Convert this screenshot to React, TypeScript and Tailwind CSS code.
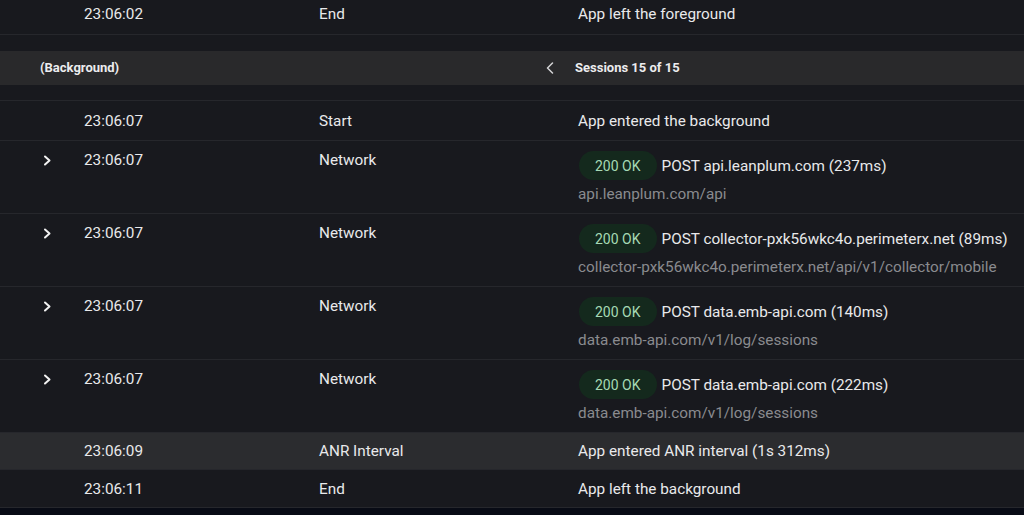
import React from "react";

type Row =
  | { kind: "simple"; time: string; type: string; text: string; highlight?: boolean }
  | { kind: "network"; time: string; host: string; ms: number; url: string };

const rows: Row[] = [
  { kind: "simple", time: "23:06:07", type: "Start", text: "App entered the background" },
  { kind: "network", time: "23:06:07", host: "api.leanplum.com", ms: 237, url: "api.leanplum.com/api" },
  {
    kind: "network",
    time: "23:06:07",
    host: "collector-pxk56wkc4o.perimeterx.net",
    ms: 89,
    url: "collector-pxk56wkc4o.perimeterx.net/api/v1/collector/mobile",
  },
  { kind: "network", time: "23:06:07", host: "data.emb-api.com", ms: 140, url: "data.emb-api.com/v1/log/sessions" },
  { kind: "network", time: "23:06:07", host: "data.emb-api.com", ms: 222, url: "data.emb-api.com/v1/log/sessions" },
  { kind: "simple", time: "23:06:09", type: "ANR Interval", text: "App entered ANR interval (1s 312ms)", highlight: true },
  { kind: "simple", time: "23:06:11", type: "End", text: "App left the background" },
];

function ChevronRight() {
  return (
    <svg width="9" height="11" viewBox="0 0 9 11" fill="none" className="mt-[5px]">
      <path d="M2 1.5 L6.5 5.5 L2 9.5" stroke="#f2f2f2" strokeWidth="2" strokeLinecap="round" strokeLinejoin="round" />
    </svg>
  );
}

function ChevronLeft() {
  return (
    <svg width="8" height="12" viewBox="0 0 8 12" fill="none">
      <path d="M6.5 1 L1.5 6 L6.5 11" stroke="#d4d4d6" strokeWidth="1.5" strokeLinecap="round" strokeLinejoin="round" />
    </svg>
  );
}

const grid = "grid grid-cols-[84px_235px_259px_1fr]";

export default function App() {
  return (
    <main
      className="h-[515px] w-[1024px] overflow-hidden bg-[#18191e] text-[15.3px] text-[#e9e9eb]"
      style={{ fontFamily: "Roboto, 'Liberation Sans', sans-serif" }}
    >
      {/* previous session tail */}
      <div className={`${grid} h-[35px] border-b border-[#26272c] leading-[20px]`}>
        <div />
        <div className="pt-[4px]">23:06:02</div>
        <div className="pt-[4px]">End</div>
        <div className="pt-[4px]">App left the foreground</div>
      </div>

      {/* session header */}
      <div className="mt-[16px] flex h-[34px] items-center bg-[#29292b] pl-[40px] text-[13px] font-bold text-[#ececee]">
        <span className="w-[506px]">(Background)</span>
        <ChevronLeft />
        <span className="ml-[21px]">Sessions 15 of 15</span>
      </div>

      <div className="mt-[15px] border-t border-[#26272c]">
        {rows.map((row, i) =>
          row.kind === "simple" ? (
            <div
              key={i}
              className={`${grid} items-center border-b border-[#26272c] leading-[20px] ${
                row.highlight ? "h-[37px] bg-[#2b2c2f]" : i === 0 ? "h-[40px]" : "h-[38px]"
              }`}
            >
              <div />
              <div>{row.time}</div>
              <div>{row.type}</div>
              <div>{row.text}</div>
            </div>
          ) : (
            <div key={i} className={`${grid} h-[73px] border-b border-[#26272c] pt-[9px] leading-[20px]`}>
              <div className="pl-[43px]">
                <ChevronRight />
              </div>
              <div>{row.time}</div>
              <div>Network</div>
              <div>
                <div className="flex items-center pt-[1px]">
                  <span className="ml-[1px] flex h-[29px] items-center rounded-full bg-[#14291d] px-[16px] text-[14px] text-[#a6d9b4]">
                    200 OK
                  </span>
                  <span className="ml-[5px]">
                    POST {row.host} ({row.ms}ms)
                  </span>
                </div>
                <div className="mt-[4px] text-[#8a8b8f]">{row.url}</div>
              </div>
            </div>
          )
        )}
      </div>
      <div className="h-[8px] bg-[#080b15]" />
    </main>
  );
}
